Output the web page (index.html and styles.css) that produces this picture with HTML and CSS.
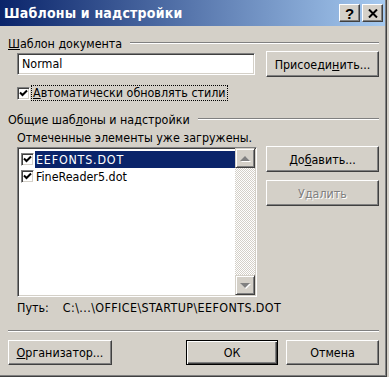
FILE: index.html
```html
<!DOCTYPE html>
<html lang="ru">
<head>
<meta charset="UTF-8">
<title>Шаблоны и надстройки</title>
<link rel="stylesheet" href="styles.css">
</head>
<body>

<div class="window">
  <div class="titlebar">
    <span class="title">Шаблоны и надстройки</span>
    <div class="title-buttons">
      <span class="tbtn help">?</span>
      <span class="tbtn close">
        <svg width="10" height="9" viewBox="0 0 10 9"><path d="M1 0.5 L9 8.5 M9 0.5 L1 8.5" stroke="#000" stroke-width="2"/></svg>
      </span>
    </div>
  </div>

  <div class="content">
    <!-- Шаблон документа -->
    <div class="group-head">
      <span><u>Ш</u>аблон документа</span>
      <span class="rule"></span>
    </div>
    <div class="doc-row">
      <div class="field">Normal</div>
      <button class="btn">Присоеди<u>н</u>ить...</button>
    </div>
    <div class="check-row">
      <span class="checkbox">
        <svg width="9" height="9" viewBox="0 0 9 9"><path d="M1 3.5 L3.5 6 L8 1.5" stroke="#000" stroke-width="2" fill="none"/></svg>
      </span>
      <span class="focus"><u>А</u>втоматически обновлять стили</span>
    </div>

    <!-- Общие шаблоны -->
    <div class="group-head second">
      <span>Общие шаб<u>л</u>оны и надстройки</span>
      <span class="rule"></span>
    </div>
    <p class="note">Отмеченные элементы уже загружены.</p>

    <div class="list-row">
      <div class="listbox">
        <ul class="items">
          <li class="item selected">
            <span class="checkbox">
              <svg width="9" height="9" viewBox="0 0 9 9"><path d="M1 3.5 L3.5 6 L8 1.5" stroke="#000" stroke-width="2" fill="none"/></svg>
            </span>
            <span class="name caps">EEFONTS.DOT</span>
          </li>
          <li class="item">
            <span class="checkbox">
              <svg width="9" height="9" viewBox="0 0 9 9"><path d="M1 3.5 L3.5 6 L8 1.5" stroke="#000" stroke-width="2" fill="none"/></svg>
            </span>
            <span class="name">FineReader5.dot</span>
          </li>
        </ul>
        <div class="scrollbar">
          <span class="arrow up"></span>
          <span class="track"></span>
          <span class="arrow down"></span>
        </div>
      </div>
      <div class="side-buttons">
        <button class="btn">До<u>б</u>авить...</button>
        <button class="btn disabled">Удалить</button>
      </div>
    </div>

    <div class="path-row">
      <span class="path-label">Путь:</span>
      <span class="path">C:\...\OFFICE\STARTUP\EEFONTS.DOT</span>
    </div>

    <div class="separator"></div>

    <div class="footer">
      <button class="btn organizer"><u>О</u>рганизатор...</button>
      <div class="footer-right">
        <button class="btn default">ОК</button>
        <button class="btn cancel">Отмена</button>
      </div>
    </div>
  </div>
</div>

</body>
</html>
```

FILE: styles.css
```css
/* Global */
body {
  margin: 0;
  background-color: #d4d0c8;
  font-family: "DejaVu Sans Condensed", "Liberation Sans", sans-serif;
  font-size: 12.4px;
  color: #000;
}

u {
  text-decoration: underline;
  text-underline-offset: 1px;
}

.window {
  width: 387px;
  height: 377px;
  box-sizing: border-box;
  padding: 0 2px 2px 0;
  background-color: #d4d0c8;
  box-shadow: inset -1px -1px #404040, inset -2px -2px #808080;
  overflow: hidden;
}

/* Title bar */
.titlebar {
  height: 26px;
  display: flex;
  align-items: center;
  justify-content: space-between;
  padding: 0 2px 0 4px;
  background: linear-gradient(to right, #0a246a, #a6caf0);
}

.title {
  color: #fff;
  font-weight: bold;
  font-size: 14px;
  letter-spacing: 0.2px;
}

.title-buttons {
  display: flex;
  gap: 2px;
}

.tbtn {
  width: 21px;
  height: 18px;
  box-sizing: border-box;
  display: flex;
  align-items: center;
  justify-content: center;
  background-color: #d4d0c8;
  border-top: 1px solid #fff;
  border-left: 1px solid #fff;
  border-right: 1px solid #404040;
  border-bottom: 1px solid #404040;
  box-shadow: inset -1px -1px #808080;
  font-family: "Liberation Sans", sans-serif;
  font-weight: bold;
  font-size: 15px;
}

/* Content */
.content {
  padding: 9px 6px 0 8px;
}

.group-head {
  height: 16px;
  display: flex;
  align-items: center;
  gap: 8px;
}

.group-head.second {
  margin-top: 11px;
}

.rule {
  flex: 1;
  border-top: 1px solid #808080;
  border-bottom: 1px solid #fff;
}

.doc-row {
  display: flex;
  align-items: center;
  justify-content: space-between;
  padding-left: 9px;
}

.field {
  width: 238px;
  height: 22px;
  box-sizing: border-box;
  padding: 2px 4px;
  background-color: #fff;
  border-top: 1px solid #808080;
  border-left: 1px solid #808080;
  border-right: 1px solid #fff;
  border-bottom: 1px solid #fff;
  box-shadow: inset 1px 1px #404040, inset -1px -1px #d4d0c8;
  line-height: 16px;
}

.btn {
  width: 113px;
  height: 26px;
  box-sizing: border-box;
  padding: 0;
  font-family: inherit;
  font-size: 12.4px;
  color: #000;
  background-color: #d4d0c8;
  border-top: 1px solid #fff;
  border-left: 1px solid #fff;
  border-right: 1px solid #404040;
  border-bottom: 1px solid #404040;
  box-shadow: inset -1px -1px #808080;
}

.btn.disabled {
  color: #808080;
  text-shadow: 1px 1px #fff;
}

.btn.default {
  border: 1px solid #000;
  box-shadow: inset 1px 1px #fff, inset -1px -1px #404040, inset -2px -2px #808080;
}

.check-row {
  display: flex;
  align-items: center;
  gap: 2px;
  margin-top: 9px;
  padding-left: 9px;
}

.checkbox {
  width: 13px;
  height: 13px;
  box-sizing: border-box;
  display: flex;
  align-items: center;
  justify-content: center;
  background-color: #fff;
  border-top: 1px solid #808080;
  border-left: 1px solid #808080;
  border-right: 1px solid #fff;
  border-bottom: 1px solid #fff;
  box-shadow: inset 1px 1px #404040, inset -1px -1px #d4d0c8;
}

.focus {
  padding: 0 1px;
  line-height: 14px;
  outline: 1px dotted #000;
}

.note {
  margin: 3px 0 0 9px;
  line-height: 16px;
}

/* List */
.list-row {
  display: flex;
  justify-content: space-between;
  margin-top: 1px;
  padding-left: 9px;
}

.listbox {
  width: 240px;
  height: 150px;
  box-sizing: border-box;
  display: flex;
  background-color: #fff;
  border-top: 1px solid #808080;
  border-left: 1px solid #808080;
  border-right: 1px solid #fff;
  border-bottom: 1px solid #fff;
  box-shadow: inset 1px 1px #404040, inset -1px -1px #d4d0c8;
  padding: 2px 1px 1px 2px;
}

.items {
  flex: 1;
  list-style: none;
  margin: 0;
  padding: 1px 0 0 1px;
}

.item {
  height: 17px;
  display: flex;
  align-items: center;
  gap: 1px;
}

.item .name {
  flex: 1;
  padding-left: 1px;
  line-height: 17px;
}

.item .caps {
  letter-spacing: 0.8px;
}

.item.selected .name {
  background-color: #0a246a;
  color: #fff;
}

.scrollbar {
  width: 20px;
  display: flex;
  flex-direction: column;
  margin-top: -2px;
}

.track {
  flex: 1;
  background: repeating-conic-gradient(#d4d0c8 0 25%, #fff 0 50%) 0 0 / 2px 2px;
}

.arrow {
  height: 20px;
  box-sizing: border-box;
  display: flex;
  align-items: center;
  justify-content: center;
  background-color: #d4d0c8;
  border-top: 1px solid #d4d0c8;
  border-left: 1px solid #d4d0c8;
  border-right: 1px solid #404040;
  border-bottom: 1px solid #404040;
  box-shadow: inset 1px 1px #fff, inset -1px -1px #808080;
}

.arrow::after {
  content: "";
  width: 0;
  height: 0;
  border-left: 5px solid transparent;
  border-right: 5px solid transparent;
}

.arrow.up::after {
  border-bottom: 5px solid #808080;
  filter: drop-shadow(1px 1px 0 #fff);
}

.arrow.down::after {
  border-top: 5px solid #808080;
  filter: drop-shadow(1px 1px 0 #fff);
}

.side-buttons {
  display: flex;
  flex-direction: column;
  gap: 8px;
  margin-top: -1px;
}

.path-row {
  display: flex;
  gap: 14px;
  margin-top: 3px;
  padding-left: 9px;
  line-height: 16px;
}

.path {
  letter-spacing: 0.4px;
}

.separator {
  margin-top: 14px;
  border-top: 1px solid #808080;
  border-bottom: 1px solid #fff;
}

.footer {
  display: flex;
  justify-content: space-between;
  margin-top: 8px;
}

.footer .btn {
  height: 25px;
}

.btn.organizer {
  width: 104px;
}

.btn.default {
  width: 92px;
}

.btn.cancel {
  width: 93px;
}

.footer-right {
  display: flex;
  gap: 8px;
}
```
